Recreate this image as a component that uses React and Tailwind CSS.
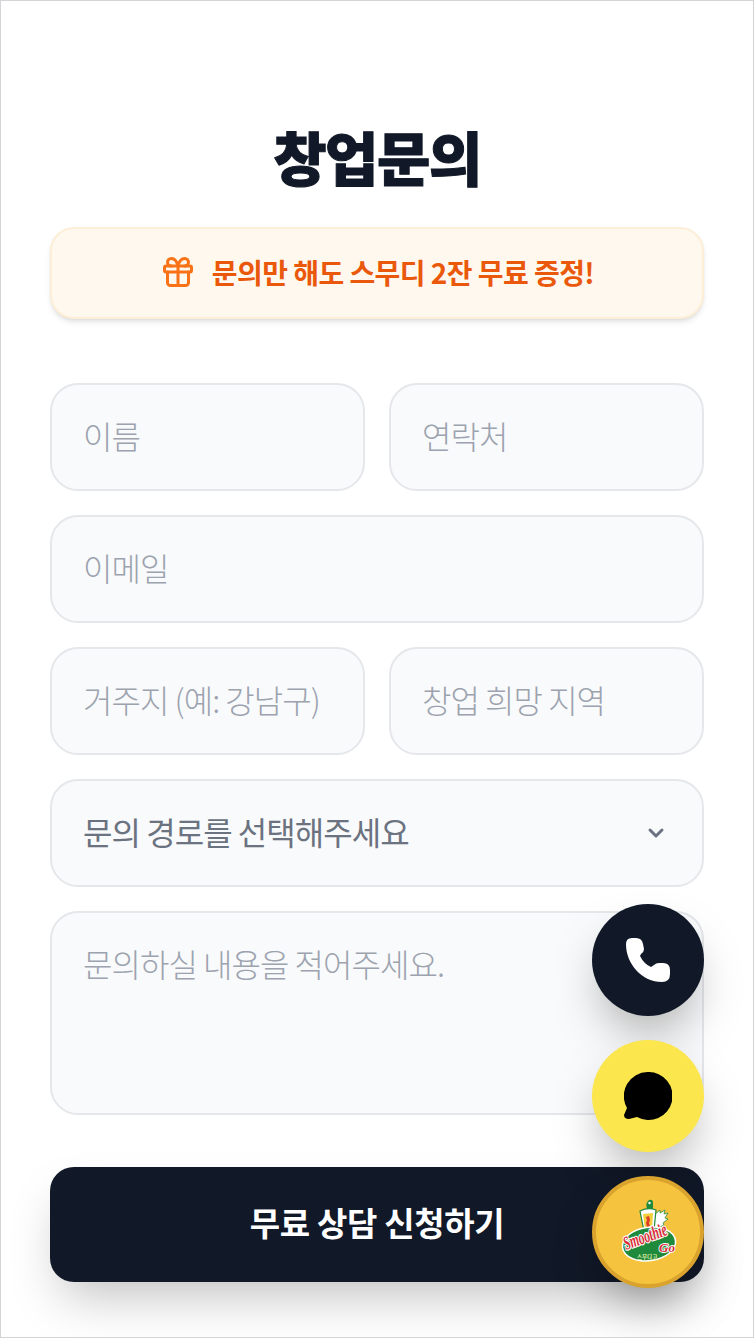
import React from "react";
import { ChevronDown, Gift } from "lucide-react";

const font = "font-['Noto_Sans_CJK_KR','Noto_Sans',sans-serif]";
const field =
  "w-full min-w-0 h-[108px] rounded-[28px] border-2 border-[#e5e7eb] bg-[#f9fafb] pl-[31px] pr-[20px] pb-[4px] text-[32px] font-light tracking-[-0.03em] text-[#111827] placeholder:text-[#9ca3af] outline-none " + font;
const circleShadow = "shadow-[0_25px_50px_-12px_rgba(0,0,0,0.35)]";

function SmoothieLogo() {
  return (
    <svg width="64" height="66" viewBox="0 0 64 66" className="overflow-visible">
      {/* swirl on top of the cup */}
      <path d="M31 10 q-2-6 2-9 q4-1 4 3 l0 7 z" fill="#1f8a3b" />
      <circle cx="33.5" cy="4" r="1.2" fill="#fff" />
      {/* wing */}
      <path d="M38 16 l6-5 0 3 5-3 -1 4 4-1 -3 5 3 1 -5 4 1 2 -6 3 -4 3 z" fill="#fff" stroke="#2b8b3f" strokeWidth="0.8" />
      {/* cup */}
      <path d="M24 12 Q32 8 40 11 L38 31 Q32 34 28 32 Z" fill="#fff" stroke="#1f8a3b" strokeWidth="1.2" />
      <path d="M27 15 L37 14 L36 30 L29 30 Z" fill="#f3cf3c" />
      <path d="M30 18 l3-1 1 4 -1 3 1 3 -3 1 -1-4 1-3 z" fill="#df3b2c" />
      {/* badge */}
      <ellipse cx="33" cy="45" rx="27.5" ry="17.5" fill="#fff" transform="rotate(-8 33 45)" />
      <ellipse cx="33" cy="45" rx="26" ry="16" fill="#1f8a3b" transform="rotate(-8 33 45)" />
      <text x="10" y="51" fontFamily="'Liberation Serif',serif" fontStyle="italic" fontWeight="700" fontSize="19" fill="#fff" stroke="#fff" strokeWidth="2.4" transform="rotate(-20 10 51)" textLength="45" lengthAdjust="spacingAndGlyphs">Smoothie</text>
      <text x="10" y="51" fontFamily="'Liberation Serif',serif" fontStyle="italic" fontWeight="700" fontSize="19" fill="#d92b35" transform="rotate(-20 10 51)" textLength="45" lengthAdjust="spacingAndGlyphs">Smoothie</text>
      <text x="43" y="53" fontFamily="'Liberation Serif',serif" fontStyle="italic" fontWeight="700" fontSize="13" fill="#d92b35" stroke="#fff" strokeWidth="1.8" paintOrder="stroke">Go</text>
      <text x="21" y="59.5" fontFamily="'Noto Sans CJK KR',sans-serif" fontWeight="700" fontSize="5.5" fill="#e5f2b0">스무디고</text>
    </svg>
  );
}

export default function App() {
  return (
    <div className={"relative h-[1338px] w-[754px] overflow-hidden border border-[#d4d4d8] bg-white px-[49px] pt-[120px] " + font}>
      <h1 className="text-center text-[58px] leading-[70px] font-black tracking-[-0.025em] text-[#111827] [-webkit-text-stroke:1px_#111827]">창업문의</h1>

      <div className="mt-[36px] flex h-[92px] items-center justify-center gap-[16px] rounded-[24px] border-2 border-[#fdeed8] bg-[#fff8ee] pb-[2px] shadow-md">
        <Gift size={36} strokeWidth={2} className="text-[#f97316]" />
        <span className="text-[28px] font-bold tracking-[-0.02em] text-[#ea580c]">문의만 해도 스무디 2잔 무료 증정!</span>
      </div>

      <form className="mt-[64px] flex flex-col gap-[24px]">
        <div className="grid grid-cols-2 gap-[24px]">
          <input className={field} placeholder="이름" />
          <input className={field} placeholder="연락처" />
        </div>
        <input className={field} placeholder="이메일" />
        <div className="grid grid-cols-2 gap-[24px]">
          <input className={field} placeholder="거주지 (예: 강남구)" />
          <input className={field} placeholder="창업 희망 지역" />
        </div>
        <div className="flex h-[108px] items-center justify-between rounded-[28px] border-2 border-[#e5e7eb] bg-[#f9fafb] pl-[31px] pr-[34px] pb-[4px] text-[32px] font-normal tracking-[-0.03em] text-[#6b7280]">
          <span>문의 경로를 선택해주세요</span>
          <ChevronDown size={24} strokeWidth={3} className="mt-[4px] text-[#6b7280]" />
        </div>
        <textarea className={field + " !h-[204px] resize-none !pb-0 pt-[26px] leading-[48px]"} placeholder="문의하실 내용을 적어주세요." />
        <button type="button" className="mt-[28px] h-[115px] rounded-[24px] bg-[#111827] pb-[4px] text-[33px] font-bold tracking-[-0.01em] text-white shadow-[0_25px_50px_-12px_rgba(0,0,0,0.25)]">
          무료 상담 신청하기
        </button>
      </form>

      <div className="absolute right-[49px] bottom-[49px] flex flex-col gap-[24px]">
        <div className={"flex size-[112px] items-center justify-center rounded-full bg-[#111827] " + circleShadow}>
          <svg width="44" height="44" viewBox="0 0 44 44">
            <path d="M0 6 q0-6 6-6 h4 q6 0 7 6 l1 5 q0 3-3 5 l-1 2 q4 8 11 11 l3-2 q2-2 5-2 h4 q7 0 7 7 v4 q0 8-8 8 C16 44 0 26 0 6z" fill="#fff" />
          </svg>
        </div>
        <div className={"flex size-[112px] items-center justify-center rounded-full bg-[#fbe64d] " + circleShadow}>
          <svg width="48" height="48" viewBox="0 0 48 48">
            <path d="M24 0 A24 24 0 1 1 13 45 L5 47 Q0 47 0 43 L3 36 A24 24 0 0 1 24 0z" fill="#000" />
          </svg>
        </div>
        <div className={"flex size-[112px] items-center justify-center rounded-full border-4 border-[#d9a32e] bg-[#f6c33f] " + circleShadow}>
          <SmoothieLogo />
        </div>
      </div>
    </div>
  );
}
